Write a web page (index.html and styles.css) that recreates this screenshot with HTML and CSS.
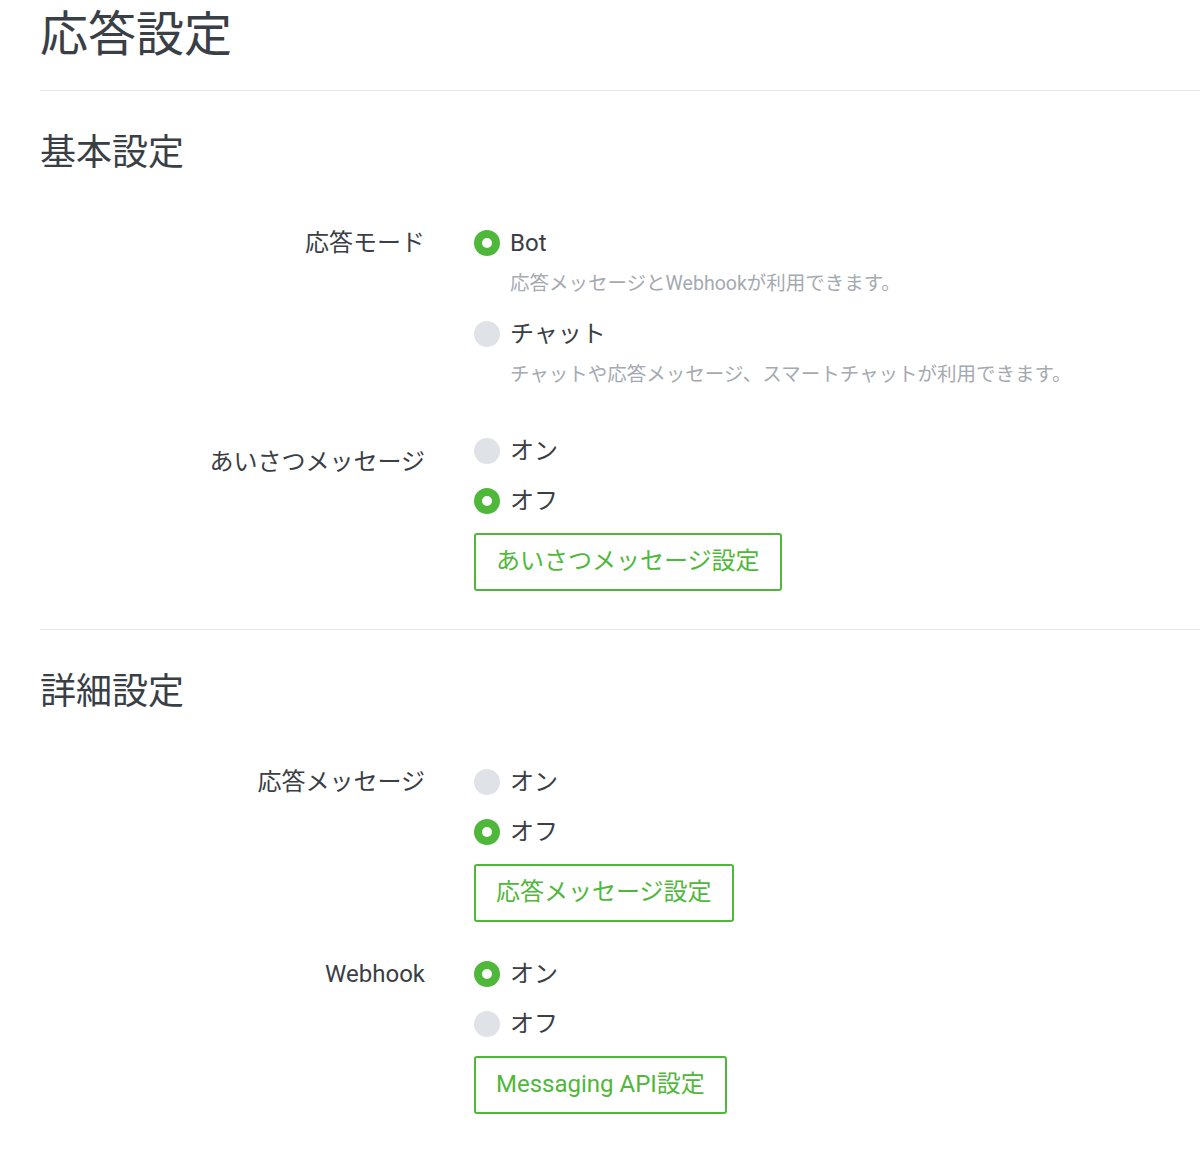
FILE: index.html
```html
<!DOCTYPE html>
<html lang="ja">
<head>
  <meta charset="UTF-8" />
  <meta name="viewport" content="width=device-width, initial-scale=1.0"/>
  <title>応答設定</title>
  <link rel="stylesheet" href="styles.css">
</head>
<body>
  <div class="page">
    <div class="page-header">
      <h1>応答設定</h1>
    </div>

    <!-- 基本設定 -->
    <div class="section">
      <h2>基本設定</h2>

      <div class="row">
        <div class="label">応答モード</div>
        <div class="options">
          <div class="option">
            <div class="radio checked"><span class="dot"></span>Bot</div>
            <div class="desc">応答メッセージとWebhookが利用できます。</div>
          </div>
          <div class="option">
            <div class="radio"><span class="dot"></span>チャット</div>
            <div class="desc">チャットや応答メッセージ、スマートチャットが利用できます。</div>
          </div>
        </div>
      </div>

      <div class="row">
        <div class="label low">あいさつメッセージ</div>
        <div class="options">
          <div class="radio"><span class="dot"></span>オン</div>
          <div class="radio checked"><span class="dot"></span>オフ</div>
          <div><button class="btn">あいさつメッセージ設定</button></div>
        </div>
      </div>
    </div>

    <!-- 詳細設定 -->
    <div class="section">
      <h2>詳細設定</h2>

      <div class="row">
        <div class="label">応答メッセージ</div>
        <div class="options">
          <div class="radio"><span class="dot"></span>オン</div>
          <div class="radio checked"><span class="dot"></span>オフ</div>
          <div><button class="btn">応答メッセージ設定</button></div>
        </div>
      </div>

      <div class="row">
        <div class="label">Webhook</div>
        <div class="options">
          <div class="radio checked"><span class="dot"></span>オン</div>
          <div class="radio"><span class="dot"></span>オフ</div>
          <div><button class="btn">Messaging API設定</button></div>
        </div>
      </div>
    </div>
  </div>
</body>
</html>
```

FILE: styles.css
```css
body {
  margin: 0; background: white; color: #3a3e45;
  font-family: Roboto, "Noto Sans CJK JP", sans-serif;
}
.page { margin-left: 40px; }

.page-header { padding: 5px 0 25px; border-bottom: 1px solid #e3e4e6; }
.page-header h1 { margin: 0; font-size: 48px; line-height: 60px; font-weight: normal; }

.section { padding: 38px 0; border-bottom: 1px solid #e3e4e6; }
.section:last-child { border-bottom: none; }
.section h2 { margin: 0 0 48px; font-size: 36px; line-height: 48px; font-weight: normal; }

.row { display: flex; gap: 49px; margin-bottom: 34px; }
.row:last-child { margin-bottom: 0; }
.label {
  width: 385px; text-align: right; font-size: 24px; line-height: 36px;
}
.label.low { padding-top: 11px; }

.options { display: flex; flex-direction: column; gap: 14px; }

.radio {
  display: flex; align-items: center; gap: 10px;
  font-size: 24px; line-height: 36px; cursor: pointer;
}
.dot {
  width: 26px; height: 26px; border-radius: 50%;
  background: #dfe2e7; box-sizing: border-box; flex-shrink: 0;
}
.radio.checked .dot { background: white; border: 8.5px solid #4fb83b; }

.desc {
  margin: 9px 0 4px 36px; font-size: 19.5px; line-height: 28px; color: #a5aab1;
}
.options .option:last-child .desc { margin-bottom: 10px; }

.btn {
  height: 58px; padding: 0 20px 2px; line-height: 36px;
  background: white; color: #4fb83b; border: 2px solid #4fb83b; border-radius: 3px;
  font-family: inherit; font-size: 24px; cursor: pointer;
}
.btn:hover { background: #f3fbf1; }
```
